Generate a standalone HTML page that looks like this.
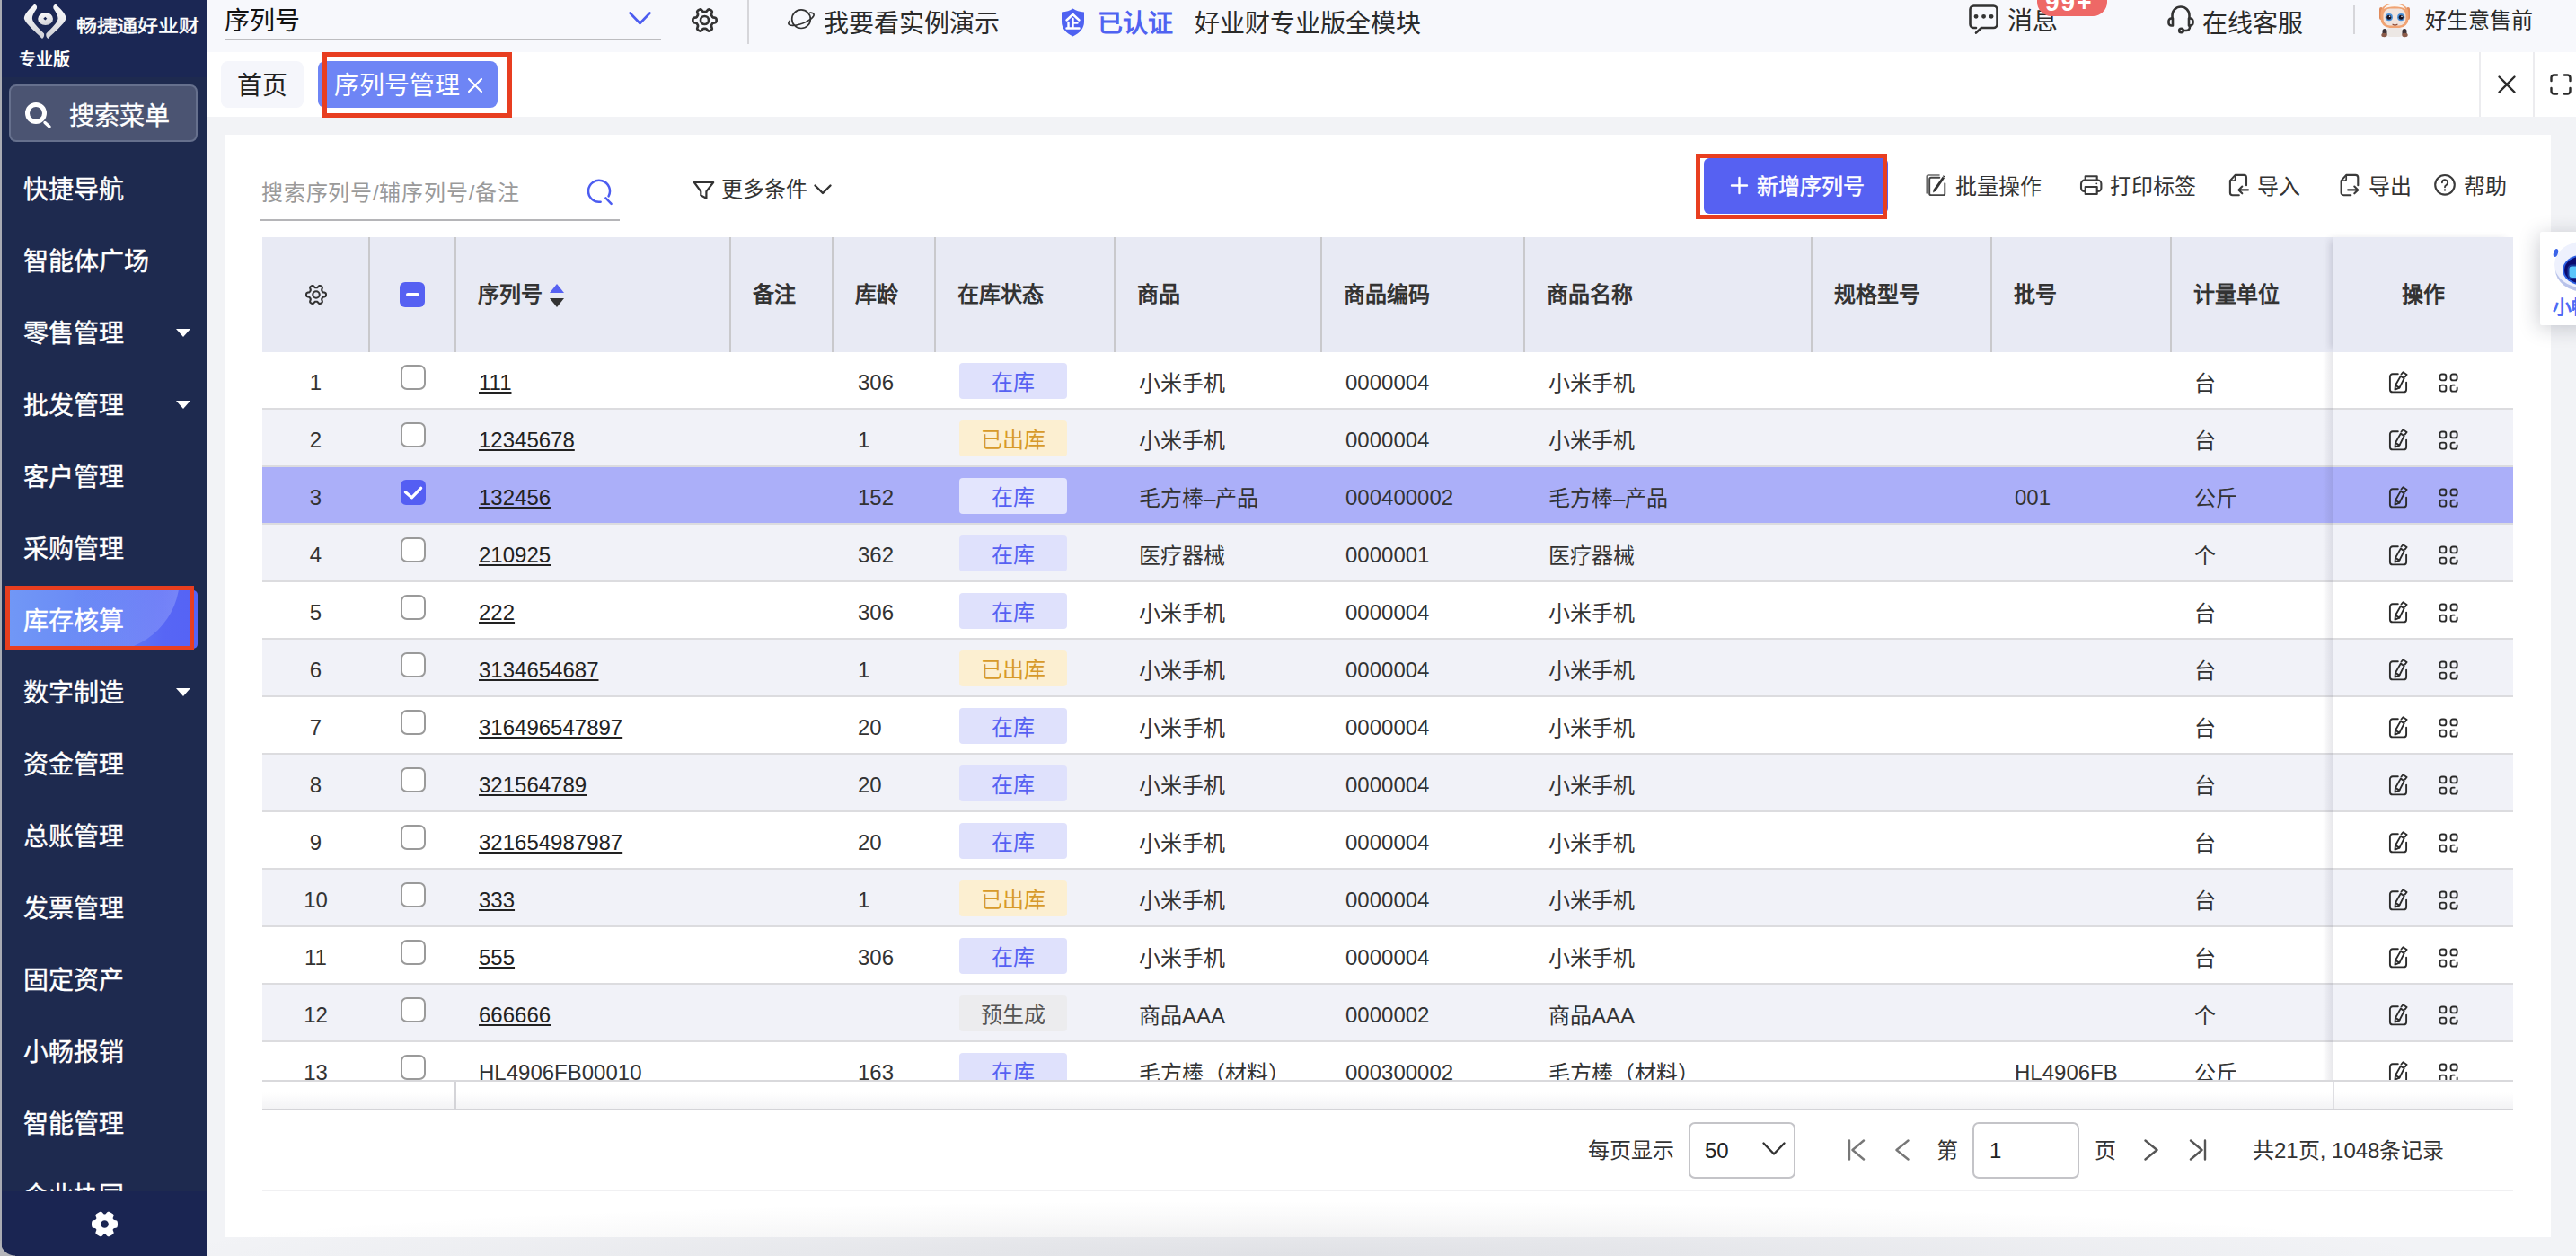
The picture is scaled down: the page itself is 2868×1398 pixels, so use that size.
<!DOCTYPE html>
<html lang="zh-CN">
<head>
<meta charset="utf-8">
<title>序列号管理</title>
<style>
*{box-sizing:border-box;margin:0;padding:0}
html,body{width:2868px;height:1398px;overflow:hidden;background:#f2f3f6}
body{font-family:"Liberation Sans",sans-serif;color:#333;position:relative;font-size:24px}
.abs{position:absolute}
svg{display:block;overflow:visible}
/* sidebar */
#side{position:absolute;left:0;top:0;width:230px;height:1398px;background:#1e2a4f;overflow:hidden}
#side .edge{position:absolute;left:0;top:0;width:2px;height:1398px;background:#a9abb3}
#side .logo{position:absolute;left:2px;top:0;width:228px;height:86px;background:#1b2754}
#side .brand{position:absolute;left:85px;top:15px;font-size:23px;font-weight:normal;-webkit-text-stroke:.55px #fff;color:#fff;letter-spacing:-0.3px;white-space:nowrap;line-height:28px;transform:scaleY(.86);transform-origin:0 50%}
#side .edition{position:absolute;left:21px;top:54px;font-size:19px;font-weight:bold;color:#fff;line-height:26px}
#side .sbox{position:absolute;left:10px;top:94px;width:210px;height:64px;background:#4b5472;border:2px solid #66708d;border-radius:8px}
#side .sbox span{position:absolute;left:65px;top:17px;font-size:28px;-webkit-text-stroke:.4px #fff;color:#fff;line-height:34px;white-space:nowrap}
#side .mi{position:absolute;left:26px;font-size:28px;-webkit-text-stroke:.4px #fff;color:#fff;line-height:40px;white-space:nowrap}
#side .arr{position:absolute;left:196px;width:0;height:0;border-left:8px solid transparent;border-right:8px solid transparent;border-top:9px solid #fff}
#side .active{position:absolute;left:7px;top:657px;width:213px;height:65px;border-radius:5px;background:linear-gradient(90deg,#7198f6 0%,#6b8cf6 35%,#6079f5 62%,#5766f5 82%,#5563f5 100%);overflow:hidden}
#side .active i{position:absolute;left:29px;top:-96px;width:164px;height:164px;border-radius:82px;background:linear-gradient(100deg,rgba(255,255,255,0) 35%,rgba(190,205,255,.34) 100%)}
#side .redbox{position:absolute;left:6px;top:652px;width:210px;height:72px;border:5px solid #e83e20}
#side .foot{position:absolute;left:2px;top:1326px;width:228px;height:72px;background:#1a2552}
#side .corner{position:absolute;left:0;top:1381px;width:17px;height:17px;background:radial-gradient(circle at 17px 0,rgba(0,0,0,0) 16px,#b4b5ba 17px)}
/* top bar */
#top{position:absolute;left:230px;top:0;width:2638px;height:58px;background:#f7f8fc}
#top .t{position:absolute;font-size:28px;line-height:36px;white-space:nowrap;color:#2a2a2a;top:4px}
.badge{position:absolute;left:2038px;top:-24px;width:78px;height:42px;border-radius:16px;background:#ee6866;overflow:hidden}
.badge span{position:absolute;left:9px;top:9px;font-size:28px;font-weight:bold;color:#fff;line-height:36px;letter-spacing:2px}
/* tabs */
#tabs{position:absolute;left:230px;top:58px;width:2638px;height:72px;background:#fff}
#tabs .tab{position:absolute;top:10px;height:52px;border-radius:8px;font-size:28px;line-height:56px;white-space:nowrap;overflow:hidden}
/* card */
#card{position:absolute;left:250px;top:150px;width:2590px;height:1227px;background:#fff}
.tb{position:absolute;font-size:24px;line-height:32px;white-space:nowrap;color:#333}
.box{position:absolute;border:2px solid #c4c4c8;border-radius:7px;background:#fff}
.box span{position:absolute;top:14px;font-size:24px;line-height:32px;color:#222}
/* table */
#thead{position:absolute;left:292px;top:264px;width:2506px;height:128px;background:#e8eaf4}
#thead .vl{position:absolute;top:0;width:2px;height:128px;background:#c9c9cc}
#thead .h{position:absolute;top:48px;font-size:24px;font-weight:bold;line-height:32px;color:#333;white-space:nowrap}
#thead .opsh{position:absolute;left:2306px;top:0;width:200px;height:128px;background:#e8eaf4;box-shadow:-6px 0 8px -3px rgba(60,60,90,.22)}
#tbody{position:absolute;left:292px;top:392px;width:2506px;height:812px;overflow:hidden;border-bottom:2px solid #d9d9dc}
.row{position:absolute;left:0;width:2506px;height:64px;border-bottom:2px solid #dcdcdf;background:#fff}
.row.alt{background:#f1f2f8}
.row.sel{background:#abaff9}
.row .c{position:absolute;top:18px;font-size:24px;line-height:32px;white-space:nowrap;color:#333}
.row .n{left:0;width:119px;text-align:center}
.row .z{top:19px}
.row .u{text-decoration:underline;text-underline-offset:2px;text-decoration-thickness:2px;color:#222}
.row .cb{position:absolute;left:154px;top:14px;width:28px;height:28px;border:2px solid #9a9a9a;border-radius:7px;background:#fff}
.row .cb.on{background:#545ef3;border-color:#545ef3;border-radius:6px}
.tag{position:absolute;left:776px;top:12px;width:120px;height:40px;border-radius:4px;font-size:24px;line-height:44px;text-align:center;overflow:hidden}
.tag.ta{background:#dfe1fc;color:#5661f2}
.tag.tb{background:#fcefd1;color:#d79a2a}
.tag.tc{background:#ececee;color:#555}
.row.sel .tag.ta{background:#e3e5fd}
.ops{position:absolute;left:2306px;top:0;width:200px;height:62px}
.opshadow{position:absolute;left:2294px;top:0;width:12px;height:813px;background:linear-gradient(90deg,rgba(60,60,90,0),rgba(60,60,90,.13))}
#scroll{position:absolute;left:292px;top:1204px;width:2506px;height:32px;border-bottom:2px solid #d4d4d8;background:linear-gradient(180deg,#fff 40%,#f3f3f5 100%)}
#float{position:absolute;left:2828px;top:258px;width:60px;height:104px;background:#fff;border-radius:2px;box-shadow:-2px 3px 22px rgba(30,35,60,.22);overflow:hidden}
#btmshade{position:absolute;left:230px;top:1338px;width:2638px;height:60px;pointer-events:none;background:radial-gradient(ellipse 1280px 62px at 46% 100%,rgba(30,32,50,.085) 0%,rgba(30,32,50,.06) 35%,rgba(30,32,50,.02) 75%,rgba(30,32,50,0) 100%)}
</style>
</head>
<body>
<div id="side">
<div class="logo"></div><div class="edge"></div>
<svg class="abs" style="left:26px;top:4px" width="49" height="40" viewBox="0 0 49 40"><defs><linearGradient id="lg1" x1="0" y1="0" x2="0.350" y2="1"><stop offset="0" stop-color="#ffffff"/><stop offset="1" stop-color="#d4d5db"/></linearGradient><linearGradient id="lg2" x1="1" y1="0" x2="0.650" y2="1"><stop offset="0" stop-color="#ffffff"/><stop offset="1" stop-color="#d4d5db"/></linearGradient></defs><path d="M12.200 .8C8 5 1.500 11 .8 16C1 21 13 31 21 38.900C23 37.500 23.600 35.200 22.900 33.300C17 27 10 21 9.900 16.500C9.900 12 13.500 8 15 5.300C15.600 3 14.200 1 12.200 .8Z" fill="url(#lg1)"/><path d="M36.20 0.80C40.40 5.00 46.90 11.00 47.60 16.00C47.40 21.00 35.40 31.00 27.40 38.90C25.40 37.50 24.80 35.20 25.50 33.30C31.40 27.00 38.40 21.00 38.50 16.50C38.50 12.00 34.90 8.00 33.40 5.30C32.80 3.00 34.20 1.00 36.20 0.80Z" fill="url(#lg2)"/><ellipse cx="24.600" cy="17" rx="8.400" ry="7.100" fill="url(#lg1)"/><path d="M24.300 14.800l2 1.900-2 1.900-2-1.900z" fill="#1b2754"/></svg>
<div class="brand">畅捷通好业财</div><div class="edition">专业版</div>
<div class="sbox"><svg class="abs" style="left:16px;top:18px" width="32" height="32" viewBox="0 0 32 32" fill="none" stroke="#fff" stroke-linecap="round"><circle cx="12" cy="12" r="9.500" stroke-width="5"/><path d="M22 22.500l5 4.500" stroke-width="3.400"/></svg><span>搜索菜单</span></div>
<div class="active"><i></i></div><div class="redbox"></div>
<div class="mi" style="top:192px">快捷导航</div>
<div class="mi" style="top:272px">智能体广场</div>
<div class="mi" style="top:352px">零售管理</div>
<div class="arr" style="top:366px"></div>
<div class="mi" style="top:432px">批发管理</div>
<div class="arr" style="top:446px"></div>
<div class="mi" style="top:512px">客户管理</div>
<div class="mi" style="top:592px">采购管理</div>
<div class="mi" style="top:672px">库存核算</div>
<div class="mi" style="top:752px">数字制造</div>
<div class="arr" style="top:766px"></div>
<div class="mi" style="top:832px">资金管理</div>
<div class="mi" style="top:912px">总账管理</div>
<div class="mi" style="top:992px">发票管理</div>
<div class="mi" style="top:1072px">固定资产</div>
<div class="mi" style="top:1152px">小畅报销</div>
<div class="mi" style="top:1232px">智能管理</div>
<div class="mi" style="top:1312px">企业协同</div>
<div class="foot"><div class="abs" style="left:99.500px;top:22px"><svg width="29" height="29" viewBox="0 0 29 29"><path fill="#fff" fill-rule="evenodd" d="M29.00 14.50 L28.97 15.45 L28.87 16.39 L28.69 17.32 L28.30 18.20 L27.12 18.78 L25.35 18.99 L24.39 19.38 L23.92 19.94 L23.67 20.62 L23.82 21.65 L24.52 23.29 L24.60 24.60 L24.04 25.38 L23.32 26.00 L22.56 26.56 L21.75 27.06 L20.91 27.50 L20.05 27.89 L19.15 28.20 L18.20 28.30 L17.10 27.57 L16.03 26.14 L15.22 25.50 L14.50 25.38 L13.78 25.50 L12.97 26.14 L11.90 27.57 L10.80 28.30 L9.85 28.20 L8.95 27.89 L8.09 27.50 L7.25 27.06 L6.44 26.56 L5.68 26.00 L4.96 25.38 L4.40 24.60 L4.48 23.29 L5.18 21.65 L5.33 20.62 L5.08 19.94 L4.61 19.38 L3.65 18.99 L1.88 18.78 L0.70 18.20 L0.31 17.32 L0.13 16.39 L0.03 15.45 L0.00 14.50 L0.03 13.55 L0.13 12.61 L0.31 11.68 L0.70 10.80 L1.88 10.22 L3.65 10.01 L4.61 9.62 L5.08 9.06 L5.33 8.38 L5.18 7.35 L4.48 5.71 L4.40 4.40 L4.96 3.62 L5.68 3.00 L6.44 2.44 L7.25 1.94 L8.09 1.50 L8.95 1.11 L9.85 0.80 L10.80 0.70 L11.90 1.43 L12.97 2.86 L13.78 3.50 L14.50 3.62 L15.22 3.50 L16.03 2.86 L17.10 1.43 L18.20 0.70 L19.15 0.80 L20.05 1.11 L20.91 1.50 L21.75 1.94 L22.56 2.44 L23.32 3.00 L24.04 3.62 L24.60 4.40 L24.52 5.71 L23.82 7.35 L23.67 8.38 L23.92 9.06 L24.39 9.62 L25.35 10.01 L27.12 10.22 L28.30 10.80 L28.69 11.68 L28.87 12.61 L28.97 13.55Z M10.15 14.50 a4.35 4.35 0 1 0 8.70 0 a4.35 4.35 0 1 0 -8.70 0Z"/></svg></div></div>
<div class="corner"></div>
</div>
<div id="top">
<div class="t" style="left:20px;top:6px;color:#111">序列号</div>
<div class="abs" style="left:20px;top:43px;width:486px;height:2px;background:#bdbdc0"></div>
<svg class="abs" style="left:470px;top:13px" width="25" height="15" viewBox="0 0 25 15" fill="none" stroke="#4c5cf0" stroke-width="2.600" stroke-linecap="round" stroke-linejoin="round"><path d="M1.500 1.500l11 11.500 11-11.500"/></svg>
<div class="abs" style="left:539.500px;top:7.500px"><svg width="29" height="29" viewBox="0 0 29 29" fill="none" stroke="#333" stroke-width="2.7" stroke-linejoin="round"><path d="M27.65 14.50 L27.60 15.36 L27.42 16.20 L26.84 16.96 L25.36 17.41 L23.88 17.68 L23.24 18.12 L22.89 18.64 L22.59 19.17 L22.28 19.70 L22.00 20.26 L21.94 21.03 L22.45 22.45 L22.80 23.96 L22.43 24.84 L21.80 25.42 L21.08 25.89 L20.31 26.28 L19.49 26.54 L18.55 26.42 L17.41 25.36 L16.43 24.21 L15.73 23.87 L15.11 23.84 L14.50 23.84 L13.89 23.84 L13.27 23.87 L12.57 24.21 L11.59 25.36 L10.45 26.42 L9.51 26.54 L8.69 26.28 L7.93 25.89 L7.20 25.42 L6.57 24.84 L6.20 23.96 L6.55 22.45 L7.06 21.03 L7.00 20.26 L6.72 19.70 L6.41 19.17 L6.11 18.64 L5.76 18.12 L5.12 17.68 L3.64 17.41 L2.16 16.96 L1.58 16.20 L1.40 15.36 L1.35 14.50 L1.40 13.64 L1.58 12.80 L2.16 12.04 L3.64 11.59 L5.12 11.32 L5.76 10.88 L6.11 10.36 L6.41 9.83 L6.72 9.30 L7.00 8.74 L7.06 7.97 L6.55 6.55 L6.20 5.04 L6.57 4.16 L7.20 3.58 L7.92 3.11 L8.69 2.72 L9.51 2.46 L10.45 2.58 L11.59 3.64 L12.57 4.79 L13.27 5.13 L13.89 5.16 L14.50 5.16 L15.11 5.16 L15.73 5.13 L16.43 4.79 L17.41 3.64 L18.55 2.58 L19.49 2.46 L20.31 2.72 L21.08 3.11 L21.80 3.58 L22.43 4.16 L22.80 5.04 L22.45 6.55 L21.94 7.97 L22.00 8.74 L22.28 9.30 L22.59 9.83 L22.89 10.36 L23.24 10.88 L23.88 11.32 L25.36 11.59 L26.84 12.04 L27.42 12.80 L27.60 13.64Z"/><circle cx="14.5" cy="14.5" r="4.50"/></svg></div>
<div class="abs" style="left:602px;top:0;width:2px;height:49px;background:#d6d6da"></div>
<div class="abs" style="left:647px;top:10px"><svg width="31" height="24" viewBox="0 0 31 24" fill="none" stroke="#333" stroke-width="1.700" stroke-linecap="round" stroke-linejoin="round"><circle cx="15.0" cy="11.2" r="10.300"/><path d="M24.93 4.09 L25.93 4.17 L26.80 4.32 L27.55 4.55 L28.15 4.85 L28.62 5.23 L28.93 5.66 L29.09 6.16 L29.10 6.72 L28.96 7.32 L28.66 7.96 L28.21 8.65 L27.61 9.35 L26.88 10.08 L26.02 10.82 L25.03 11.57 L23.94 12.31 L22.75 13.04 L21.47 13.75 L20.13 14.43 L18.72 15.07 L17.28 15.68 L15.81 16.23 L14.33 16.73 L12.86 17.17 L11.42 17.54 L10.01 17.85 L8.65 18.08 L7.37 18.23 L6.17 18.31 L5.07 18.31 L4.07 18.23 L3.20 18.08 L2.45 17.85 L1.85 17.55 L1.38 17.17 L1.07 16.74 L0.91 16.24 L0.90 15.68 L1.04 15.08 L1.34 14.44 L1.79 13.75 L2.39 13.05"/></svg></div>
<div class="t" style="left:687px;top:9px">我要看实例演示</div>
<svg class="abs" style="left:951px;top:9px" width="27" height="32" viewBox="0 0 27 32"><path d="M13.500 .5c3 2.300 7.500 3.700 12.500 3.900v10.900c0 7.200-5 12.900-12.500 16.200C6 28.200 1 22.500 1 15.300V4.400C6 4.200 10.500 2.800 13.500 .5z" fill="#4f62f1"/><path d="M6.500 13.500l7-6.500 7 6.500M13.500 12v10M13.500 16.500h5M8.500 16v6.500M6.500 22.500h14" fill="none" stroke="#fff" stroke-width="2.400" stroke-linecap="round" stroke-linejoin="round"/></svg>
<div class="t" style="left:992px;top:9px;color:#4f62f1;font-weight:bold">已认证</div>
<div class="t" style="left:1100px;top:9px">好业财专业版全模块</div>
<svg class="abs" style="left:1962px;top:5px" width="33" height="33" viewBox="0 0 33 33" fill="none" stroke="#333" stroke-width="2.600" stroke-linecap="round" stroke-linejoin="round"><path d="M8 31.500l6-5.500h13.500a4 4 0 0 0 4-4V5.500a4 4 0 0 0-4-4h-22a4 4 0 0 0-4 4V22a4 4 0 0 0 4 4H8"/><path d="M8 13.300h.1M16.500 13.300h.1M25 13.300h.1" stroke-width="4.800"/></svg>
<div class="t" style="left:2005px;top:6px">消息</div>
<div class="badge"><span>99+</span></div>
<svg class="abs" style="left:2183px;top:6px" width="30" height="31" viewBox="0 0 30 31" fill="none" stroke="#333" stroke-width="2.600" stroke-linecap="round" stroke-linejoin="round"><path d="M5.500 14.500V11a9.500 9.500 0 0 1 19 0v3.500"/><path d="M6 14.500H4.500a3 3 0 0 0-3 3v2a3 3 0 0 0 3 3H6z"/><path d="M24 14.500h1.500a3 3 0 0 1 3 3v2a3 3 0 0 1-3 3H24z"/><path d="M25 22.500v1.500a4 4 0 0 1-4 4h-3"/><circle cx="15.500" cy="28" r="2.300"/></svg>
<div class="t" style="left:2222px;top:9px">在线客服</div>
<div class="abs" style="left:2390px;top:6px;width:2px;height:32px;background:#d6d6da"></div>
<svg class="abs" style="left:2418px;top:4px" width="36" height="38" viewBox="0 0 36 38">
<rect x="9" y="27" width="18" height="10" rx="4" fill="#ece7e4"/><rect x="4.500" y="28" width="5" height="8" rx="2.500" fill="#3b3136"/><rect x="26.500" y="28" width="5" height="8" rx="2.500" fill="#3b3136"/><ellipse cx="6.500" cy="35" rx="3.200" ry="2.200" fill="#8a5a48"/><ellipse cx="29.500" cy="35" rx="3.200" ry="2.200" fill="#8a5a48"/>
<rect x="1" y="4" width="4" height="14" rx="2" fill="#e08b5c"/><rect x="31" y="4" width="4" height="14" rx="2" fill="#e08b5c"/>
<rect x="2.500" y="0.500" width="31" height="26.500" rx="10" fill="#f0a373"/><path d="M6 6c2-4 6-5.500 12-5.500S28 2 30 6c-3-2-7-2.800-12-2.800S9 4 6 6z" fill="#fbf7f4"/>
<rect x="5.500" y="5.500" width="25" height="19" rx="7.500" fill="#efe3dd"/>
<circle cx="11.800" cy="15.200" r="4.100" fill="#4a90d9"/><circle cx="25.200" cy="15.200" r="4.100" fill="#4a90d9"/><circle cx="11.800" cy="15.200" r="2.500" fill="#1b1320"/><circle cx="25.200" cy="15.200" r="2.500" fill="#1b1320"/><circle cx="12.600" cy="14.300" r=".8" fill="#fff"/><circle cx="26" cy="14.300" r=".8" fill="#fff"/>
<path d="M16 23.200q2.500 1.500 5 0" stroke="#8c4a35" stroke-width="1.200" fill="none" stroke-linecap="round"/></svg>
<div class="t" style="left:2470px;font-size:24px;top:5px">好生意售前</div>
</div>
<div id="tabs">
<div class="tab" style="left:16px;width:92px;background:#f5f6fb;color:#222;text-align:center">首页</div>
<div class="tab" style="left:124px;width:200px;background:#6e85f5;color:#fff;padding-left:18px">序列号管理<svg class="abs" style="left:165.500px;top:17.500px" width="18" height="18" viewBox="0 0 18 18" stroke="#fff" stroke-width="2.200" stroke-linecap="round"><path d="M2 2l14 14M16 2L2 16"/></svg></div>
<div class="abs" style="left:129px;top:0;width:211px;height:73px;border:5px solid #e83e20"></div>
<div class="abs" style="left:2530px;top:0;width:2px;height:72px;background:#ececef"></div>
<div class="abs" style="left:2590px;top:0;width:2px;height:72px;background:#ececef"></div>
<svg class="abs" style="left:2551px;top:26px" width="20" height="20" viewBox="0 0 20 20" stroke="#2a2a2a" stroke-width="2.300" stroke-linecap="round"><path d="M1.500 1.500l17 17M18.500 1.500l-17 17"/></svg>
<svg class="abs" style="left:2609px;top:24px" width="24" height="24" viewBox="0 0 24 24" fill="none" stroke="#2a2a2a" stroke-width="2.400" stroke-linecap="round" stroke-linejoin="round"><path d="M1.500 8V4.500a3 3 0 0 1 3-3H8M16 1.500h3.500a3 3 0 0 1 3 3V8M22.500 16v3.500a3 3 0 0 1-3 3H16M8 22.500H4.500a3 3 0 0 1-3-3V16"/></svg>
</div>
<div id="card"></div>
<div class="tb" style="left:291px;top:199px;color:#9a9a9a;letter-spacing:.8px">搜索序列号/辅序列号/备注</div>
<div class="abs" style="left:290px;top:244px;width:400px;height:2px;background:#b5b5b8"></div>
<svg class="abs" style="left:654px;top:200px" width="30" height="30" viewBox="0 0 30 30" fill="none" stroke="#4c5cf0" stroke-width="2.500" stroke-linecap="round"><path d="M14.67 24.68A12.0 12.0 0 1 1 23.60 18.43"/><path d="M20.36 20.43L26.62 26.90"/></svg>
<svg class="abs" style="left:771px;top:200px" width="25" height="23" viewBox="0 0 25 23" fill="none" stroke="#333" stroke-width="2.200" stroke-linecap="round" stroke-linejoin="round"><path d="M1.900 3H23.200L15.400 13.200V20.800L9.300 17.400V13.200Z"/></svg>
<div class="tb" style="left:803px;top:195px">更多条件</div>
<svg class="abs" style="left:906px;top:205px" width="20" height="12" viewBox="0 0 20 12" fill="none" stroke="#333" stroke-width="2.400" stroke-linecap="round" stroke-linejoin="round"><path d="M1.500 1.500l8.500 8.500 8.500-8.500"/></svg>
<div class="abs" style="left:1897px;top:176px;width:205px;height:62px;background:#5661f2;border-radius:6px"></div>
<svg class="abs" style="left:1927px;top:197px" width="19" height="19" viewBox="0 0 19 19" stroke="#fff" stroke-width="2.400" stroke-linecap="round"><path d="M9.500 1v17M1 9.500h17"/></svg>
<div class="tb" style="left:1956px;top:192px;color:#fff;-webkit-text-stroke:.5px #fff">新增序列号</div>
<div class="abs" style="left:1888px;top:171px;width:213px;height:73px;border:5px solid #e83e20"></div>
<div class="abs" style="left:2144px;top:194px"><svg width="23" height="25" viewBox="0 0 23 25" fill="none" stroke-linecap="round" stroke-linejoin="round"><path d="M1.200 21V2.700Q1.200 1 2.900 1H15" stroke="#6a6a6a" stroke-width="1.600"/><path d="M15.300 3.700H5.900Q4.200 3.700 4.200 5.400V21.400Q4.200 23.100 5.900 23.100H19.600Q21.300 23.100 21.300 21.400V10.300" stroke="#444" stroke-width="1.900"/><path d="M18.700 2.700l2.300 1.500L11.300 18.600 8.100 20.500 8.600 16.900z" fill="#333"/><path d="M19.600 1.300l2.300 1.500-.7 1-2.300-1.500z" fill="#333"/></svg></div><div class="tb" style="left:2177px;top:192px">批量操作</div>
<div class="abs" style="left:2316px;top:195px"><svg width="25" height="22" viewBox="0 0 25 22" fill="none" stroke="#3a3a3a" stroke-width="2.100" stroke-linecap="butt" stroke-linejoin="round"><path d="M5.700 5.500V1.300H18.700V5.500"/><path d="M5.700 18H4.700A3.700 3.700 0 0 1 1 14.300V9.500A4 4 0 0 1 5 5.500H19.400A4 4 0 0 1 23.400 9.500V14.300A3.700 3.700 0 0 1 19.700 18H18.700"/><path d="M5.700 13H18.700V21H5.700z"/><circle cx="18.300" cy="9.300" r=".9" fill="#3a3a3a" stroke="none"/></svg></div><div class="tb" style="left:2349px;top:192px">打印标签</div>
<div class="abs" style="left:2482px;top:194px"><svg width="22" height="24" viewBox="0 0 22 24" fill="none" stroke="#3a3a3a" stroke-width="2.100" stroke-linecap="round" stroke-linejoin="round"><path d="M10.800 23.200H3.600A2.800 2.800 0 0 1 .900 20.400V7.100L6.600 .9H16.200A2.800 2.800 0 0 1 19 3.700V12.300"/><path d="M6.600 1.500V5.500A1.500 1.500 0 0 1 5.100 7H1.500" stroke-width="1.700"/><path d="M21 17.400H10.800M14.300 13.500L10.400 17.400 14.300 21.300"/></svg></div><div class="tb" style="left:2513px;top:192px">导入</div>
<div class="abs" style="left:2606px;top:194px"><svg width="22" height="24" viewBox="0 0 22 24" fill="none" stroke="#3a3a3a" stroke-width="2.100" stroke-linecap="round" stroke-linejoin="round"><path d="M11.300 23.200H3.400A2.800 2.800 0 0 1 .600 20.400V7.100L6.200 .9H16.500A2.800 2.800 0 0 1 19.300 3.700V12.300"/><path d="M6.200 1.500V5.500A1.500 1.500 0 0 1 4.700 7H1.200" stroke-width="1.700"/><path d="M8.100 17.400H19M15.300 13.500L19.300 17.400 15.300 21.300"/></svg></div><div class="tb" style="left:2637px;top:192px">导出</div>
<div class="abs" style="left:2710px;top:194px"><svg width="24" height="24" viewBox="0 0 24 24" fill="none" stroke="#3a3a3a" stroke-width="2.100" stroke-linecap="round" stroke-linejoin="round"><circle cx="12" cy="11.800" r="10.800"/><path d="M8.900 9.300a3.100 3.100 0 1 1 4.600 2.700c-1 .600-1.500 1.200-1.500 2.300" stroke-width="1.900"/><circle cx="12" cy="17.400" r="1.200" fill="#3a3a3a" stroke="none"/></svg></div><div class="tb" style="left:2743px;top:192px">帮助</div>
<div id="thead">
<div class="vl" style="left:118px"></div>
<div class="vl" style="left:214px"></div>
<div class="vl" style="left:520px"></div>
<div class="vl" style="left:634px"></div>
<div class="vl" style="left:748px"></div>
<div class="vl" style="left:948px"></div>
<div class="vl" style="left:1178px"></div>
<div class="vl" style="left:1404px"></div>
<div class="vl" style="left:1724px"></div>
<div class="vl" style="left:1924px"></div>
<div class="vl" style="left:2124px"></div>
<div class="abs" style="left:47.800px;top:52px"><svg width="24" height="24" viewBox="0 0 24 24" fill="none" stroke="#333" stroke-width="2.1" stroke-linejoin="round"><path d="M22.95 12.00 L22.91 12.72 L22.76 13.42 L22.28 14.04 L21.04 14.42 L19.81 14.65 L19.27 15.01 L18.99 15.45 L18.73 15.89 L18.48 16.33 L18.25 16.79 L18.20 17.44 L18.62 18.62 L18.91 19.88 L18.61 20.61 L18.07 21.09 L17.48 21.48 L16.84 21.81 L16.15 22.02 L15.37 21.92 L14.42 21.04 L13.61 20.09 L13.03 19.81 L12.51 19.77 L12.00 19.77 L11.49 19.77 L10.97 19.81 L10.39 20.09 L9.58 21.04 L8.63 21.92 L7.85 22.02 L7.16 21.81 L6.53 21.48 L5.93 21.09 L5.39 20.61 L5.09 19.88 L5.38 18.62 L5.80 17.44 L5.75 16.79 L5.52 16.33 L5.27 15.89 L5.01 15.45 L4.73 15.01 L4.19 14.65 L2.96 14.42 L1.72 14.04 L1.24 13.42 L1.09 12.72 L1.05 12.00 L1.09 11.28 L1.24 10.58 L1.72 9.96 L2.96 9.58 L4.19 9.35 L4.73 8.99 L5.01 8.55 L5.27 8.11 L5.52 7.67 L5.75 7.21 L5.80 6.56 L5.38 5.38 L5.09 4.12 L5.39 3.39 L5.93 2.91 L6.52 2.52 L7.16 2.19 L7.85 1.98 L8.63 2.08 L9.58 2.96 L10.39 3.91 L10.97 4.19 L11.49 4.23 L12.00 4.23 L12.51 4.23 L13.03 4.19 L13.61 3.91 L14.42 2.96 L15.37 2.08 L16.15 1.98 L16.84 2.19 L17.48 2.52 L18.07 2.91 L18.61 3.39 L18.91 4.12 L18.62 5.38 L18.20 6.56 L18.25 7.21 L18.48 7.67 L18.73 8.11 L18.99 8.55 L19.27 8.99 L19.81 9.35 L21.04 9.58 L22.28 9.96 L22.76 10.58 L22.91 11.28Z"/><circle cx="12.0" cy="12.0" r="3.72"/></svg></div>
<div class="abs" style="left:153px;top:50px;width:28px;height:28px;border-radius:6px;background:#5661f2"><div class="abs" style="left:6.500px;top:12px;width:15px;height:4px;border-radius:2px;background:#fff"></div></div>
<div class="h" style="left:240px">序列号</div>
<div class="h" style="left:546px">备注</div>
<div class="h" style="left:660px">库龄</div>
<div class="h" style="left:774px">在库状态</div>
<div class="h" style="left:974px">商品</div>
<div class="h" style="left:1204px">商品编码</div>
<div class="h" style="left:1430px">商品名称</div>
<div class="h" style="left:1750px">规格型号</div>
<div class="h" style="left:1950px">批号</div>
<div class="h" style="left:2150px">计量单位</div>
<div class="abs" style="left:320px;top:52px;width:0;height:0;border-left:8.500px solid transparent;border-right:8.500px solid transparent;border-bottom:10px solid #5661f2"></div>
<div class="abs" style="left:320px;top:68px;width:0;height:0;border-left:8.500px solid transparent;border-right:8.500px solid transparent;border-top:10px solid #333"></div>
<div class="opsh"><div class="h" style="left:0;width:200px;text-align:center">操作</div></div>
</div>
<div id="tbody">
<div class="row" style="top:0px">
<div class="c n">1</div>
<div class="cb"></div>
<div class="c u" style="left:241px">111</div>
<div class="c" style="left:663px">306</div>
<div class="tag ta">在库</div>
<div class="c z" style="left:976px">小米手机</div>
<div class="c" style="left:1206px">0000004</div>
<div class="c z" style="left:1432px">小米手机</div>
<div class="c z" style="left:2151px">台</div>
<div class="ops"><div class="abs" style="left:61px;top:22px"><svg width="22" height="24" viewBox="0 0 22 24" fill="none" stroke="#2b2b2b" stroke-width="1.900" stroke-linecap="round" stroke-linejoin="round"><path d="M10.800 2.300H4.900A3 3 0 0 0 1.900 5.300V19.400A3 3 0 0 0 4.900 22.400H17.100A3 3 0 0 0 20.100 19.400V11.600"/><path d="M13.800 4.600L17.700 7.100 12.400 17.600 7.500 19.600 8 14.700Z"/><path d="M8 14.700L12.400 17.600"/><path d="M14.500 2.500L16.400 .3 20.600 3 18.700 5.300"/></svg></div><div class="abs" style="left:117px;top:23px"><svg width="22" height="22" viewBox="0 0 22 22" fill="none" stroke="#2b2b2b" stroke-width="1.900" stroke-linecap="round" stroke-linejoin="round"><rect x="1.450" y="1.550" width="6.900" height="6.800" rx="2.400"/><rect x="13.550" y="1.550" width="7.100" height="6.800" rx="2.400"/><rect x="1.450" y="13.650" width="6.900" height="6.950" rx="2.400"/><path d="M17.600 13.650H15.950A2.400 2.400 0 0 0 13.550 16.050V18.200A2.400 2.400 0 0 0 15.950 20.600H18.250A2.400 2.400 0 0 0 20.650 18.200V16.500"/></svg></div></div>
</div>
<div class="row alt" style="top:64px">
<div class="c n">2</div>
<div class="cb"></div>
<div class="c u" style="left:241px">12345678</div>
<div class="c" style="left:663px">1</div>
<div class="tag tb">已出库</div>
<div class="c z" style="left:976px">小米手机</div>
<div class="c" style="left:1206px">0000004</div>
<div class="c z" style="left:1432px">小米手机</div>
<div class="c z" style="left:2151px">台</div>
<div class="ops"><div class="abs" style="left:61px;top:22px"><svg width="22" height="24" viewBox="0 0 22 24" fill="none" stroke="#2b2b2b" stroke-width="1.900" stroke-linecap="round" stroke-linejoin="round"><path d="M10.800 2.300H4.900A3 3 0 0 0 1.900 5.300V19.400A3 3 0 0 0 4.900 22.400H17.100A3 3 0 0 0 20.100 19.400V11.600"/><path d="M13.800 4.600L17.700 7.100 12.400 17.600 7.500 19.600 8 14.700Z"/><path d="M8 14.700L12.400 17.600"/><path d="M14.500 2.500L16.400 .3 20.600 3 18.700 5.300"/></svg></div><div class="abs" style="left:117px;top:23px"><svg width="22" height="22" viewBox="0 0 22 22" fill="none" stroke="#2b2b2b" stroke-width="1.900" stroke-linecap="round" stroke-linejoin="round"><rect x="1.450" y="1.550" width="6.900" height="6.800" rx="2.400"/><rect x="13.550" y="1.550" width="7.100" height="6.800" rx="2.400"/><rect x="1.450" y="13.650" width="6.900" height="6.950" rx="2.400"/><path d="M17.600 13.650H15.950A2.400 2.400 0 0 0 13.550 16.050V18.200A2.400 2.400 0 0 0 15.950 20.600H18.250A2.400 2.400 0 0 0 20.650 18.200V16.500"/></svg></div></div>
</div>
<div class="row sel" style="top:128px">
<div class="c n">3</div>
<div class="cb on"><svg class="abs" style="left:2px;top:3px" width="20" height="18" viewBox="0 0 20 18" fill="none" stroke="#fff" stroke-width="3.300" stroke-linecap="round" stroke-linejoin="round"><path d="M1.400 8.800L8.400 14.800L18.600 4.300"/></svg></div>
<div class="c u" style="left:241px">132456</div>
<div class="c" style="left:663px">152</div>
<div class="tag ta">在库</div>
<div class="c z" style="left:976px">毛方棒–产品</div>
<div class="c" style="left:1206px">000400002</div>
<div class="c z" style="left:1432px">毛方棒–产品</div>
<div class="c" style="left:1951px">001</div>
<div class="c z" style="left:2151px">公斤</div>
<div class="ops"><div class="abs" style="left:61px;top:22px"><svg width="22" height="24" viewBox="0 0 22 24" fill="none" stroke="#2b2b2b" stroke-width="1.900" stroke-linecap="round" stroke-linejoin="round"><path d="M10.800 2.300H4.900A3 3 0 0 0 1.900 5.300V19.400A3 3 0 0 0 4.900 22.400H17.100A3 3 0 0 0 20.100 19.400V11.600"/><path d="M13.800 4.600L17.700 7.100 12.400 17.600 7.500 19.600 8 14.700Z"/><path d="M8 14.700L12.400 17.600"/><path d="M14.500 2.500L16.400 .3 20.600 3 18.700 5.300"/></svg></div><div class="abs" style="left:117px;top:23px"><svg width="22" height="22" viewBox="0 0 22 22" fill="none" stroke="#2b2b2b" stroke-width="1.900" stroke-linecap="round" stroke-linejoin="round"><rect x="1.450" y="1.550" width="6.900" height="6.800" rx="2.400"/><rect x="13.550" y="1.550" width="7.100" height="6.800" rx="2.400"/><rect x="1.450" y="13.650" width="6.900" height="6.950" rx="2.400"/><path d="M17.600 13.650H15.950A2.400 2.400 0 0 0 13.550 16.050V18.200A2.400 2.400 0 0 0 15.950 20.600H18.250A2.400 2.400 0 0 0 20.650 18.200V16.500"/></svg></div></div>
</div>
<div class="row alt" style="top:192px">
<div class="c n">4</div>
<div class="cb"></div>
<div class="c u" style="left:241px">210925</div>
<div class="c" style="left:663px">362</div>
<div class="tag ta">在库</div>
<div class="c z" style="left:976px">医疗器械</div>
<div class="c" style="left:1206px">0000001</div>
<div class="c z" style="left:1432px">医疗器械</div>
<div class="c z" style="left:2151px">个</div>
<div class="ops"><div class="abs" style="left:61px;top:22px"><svg width="22" height="24" viewBox="0 0 22 24" fill="none" stroke="#2b2b2b" stroke-width="1.900" stroke-linecap="round" stroke-linejoin="round"><path d="M10.800 2.300H4.900A3 3 0 0 0 1.900 5.300V19.400A3 3 0 0 0 4.900 22.400H17.100A3 3 0 0 0 20.100 19.400V11.600"/><path d="M13.800 4.600L17.700 7.100 12.400 17.600 7.500 19.600 8 14.700Z"/><path d="M8 14.700L12.400 17.600"/><path d="M14.500 2.500L16.400 .3 20.600 3 18.700 5.300"/></svg></div><div class="abs" style="left:117px;top:23px"><svg width="22" height="22" viewBox="0 0 22 22" fill="none" stroke="#2b2b2b" stroke-width="1.900" stroke-linecap="round" stroke-linejoin="round"><rect x="1.450" y="1.550" width="6.900" height="6.800" rx="2.400"/><rect x="13.550" y="1.550" width="7.100" height="6.800" rx="2.400"/><rect x="1.450" y="13.650" width="6.900" height="6.950" rx="2.400"/><path d="M17.600 13.650H15.950A2.400 2.400 0 0 0 13.550 16.050V18.200A2.400 2.400 0 0 0 15.950 20.600H18.250A2.400 2.400 0 0 0 20.650 18.200V16.500"/></svg></div></div>
</div>
<div class="row" style="top:256px">
<div class="c n">5</div>
<div class="cb"></div>
<div class="c u" style="left:241px">222</div>
<div class="c" style="left:663px">306</div>
<div class="tag ta">在库</div>
<div class="c z" style="left:976px">小米手机</div>
<div class="c" style="left:1206px">0000004</div>
<div class="c z" style="left:1432px">小米手机</div>
<div class="c z" style="left:2151px">台</div>
<div class="ops"><div class="abs" style="left:61px;top:22px"><svg width="22" height="24" viewBox="0 0 22 24" fill="none" stroke="#2b2b2b" stroke-width="1.900" stroke-linecap="round" stroke-linejoin="round"><path d="M10.800 2.300H4.900A3 3 0 0 0 1.900 5.300V19.400A3 3 0 0 0 4.900 22.400H17.100A3 3 0 0 0 20.100 19.400V11.600"/><path d="M13.800 4.600L17.700 7.100 12.400 17.600 7.500 19.600 8 14.700Z"/><path d="M8 14.700L12.400 17.600"/><path d="M14.500 2.500L16.400 .3 20.600 3 18.700 5.300"/></svg></div><div class="abs" style="left:117px;top:23px"><svg width="22" height="22" viewBox="0 0 22 22" fill="none" stroke="#2b2b2b" stroke-width="1.900" stroke-linecap="round" stroke-linejoin="round"><rect x="1.450" y="1.550" width="6.900" height="6.800" rx="2.400"/><rect x="13.550" y="1.550" width="7.100" height="6.800" rx="2.400"/><rect x="1.450" y="13.650" width="6.900" height="6.950" rx="2.400"/><path d="M17.600 13.650H15.950A2.400 2.400 0 0 0 13.550 16.050V18.200A2.400 2.400 0 0 0 15.950 20.600H18.250A2.400 2.400 0 0 0 20.650 18.200V16.500"/></svg></div></div>
</div>
<div class="row alt" style="top:320px">
<div class="c n">6</div>
<div class="cb"></div>
<div class="c u" style="left:241px">3134654687</div>
<div class="c" style="left:663px">1</div>
<div class="tag tb">已出库</div>
<div class="c z" style="left:976px">小米手机</div>
<div class="c" style="left:1206px">0000004</div>
<div class="c z" style="left:1432px">小米手机</div>
<div class="c z" style="left:2151px">台</div>
<div class="ops"><div class="abs" style="left:61px;top:22px"><svg width="22" height="24" viewBox="0 0 22 24" fill="none" stroke="#2b2b2b" stroke-width="1.900" stroke-linecap="round" stroke-linejoin="round"><path d="M10.800 2.300H4.900A3 3 0 0 0 1.900 5.300V19.400A3 3 0 0 0 4.900 22.400H17.100A3 3 0 0 0 20.100 19.400V11.600"/><path d="M13.800 4.600L17.700 7.100 12.400 17.600 7.500 19.600 8 14.700Z"/><path d="M8 14.700L12.400 17.600"/><path d="M14.500 2.500L16.400 .3 20.600 3 18.700 5.300"/></svg></div><div class="abs" style="left:117px;top:23px"><svg width="22" height="22" viewBox="0 0 22 22" fill="none" stroke="#2b2b2b" stroke-width="1.900" stroke-linecap="round" stroke-linejoin="round"><rect x="1.450" y="1.550" width="6.900" height="6.800" rx="2.400"/><rect x="13.550" y="1.550" width="7.100" height="6.800" rx="2.400"/><rect x="1.450" y="13.650" width="6.900" height="6.950" rx="2.400"/><path d="M17.600 13.650H15.950A2.400 2.400 0 0 0 13.550 16.050V18.200A2.400 2.400 0 0 0 15.950 20.600H18.250A2.400 2.400 0 0 0 20.650 18.200V16.500"/></svg></div></div>
</div>
<div class="row" style="top:384px">
<div class="c n">7</div>
<div class="cb"></div>
<div class="c u" style="left:241px">316496547897</div>
<div class="c" style="left:663px">20</div>
<div class="tag ta">在库</div>
<div class="c z" style="left:976px">小米手机</div>
<div class="c" style="left:1206px">0000004</div>
<div class="c z" style="left:1432px">小米手机</div>
<div class="c z" style="left:2151px">台</div>
<div class="ops"><div class="abs" style="left:61px;top:22px"><svg width="22" height="24" viewBox="0 0 22 24" fill="none" stroke="#2b2b2b" stroke-width="1.900" stroke-linecap="round" stroke-linejoin="round"><path d="M10.800 2.300H4.900A3 3 0 0 0 1.900 5.300V19.400A3 3 0 0 0 4.900 22.400H17.100A3 3 0 0 0 20.100 19.400V11.600"/><path d="M13.800 4.600L17.700 7.100 12.400 17.600 7.500 19.600 8 14.700Z"/><path d="M8 14.700L12.400 17.600"/><path d="M14.500 2.500L16.400 .3 20.600 3 18.700 5.300"/></svg></div><div class="abs" style="left:117px;top:23px"><svg width="22" height="22" viewBox="0 0 22 22" fill="none" stroke="#2b2b2b" stroke-width="1.900" stroke-linecap="round" stroke-linejoin="round"><rect x="1.450" y="1.550" width="6.900" height="6.800" rx="2.400"/><rect x="13.550" y="1.550" width="7.100" height="6.800" rx="2.400"/><rect x="1.450" y="13.650" width="6.900" height="6.950" rx="2.400"/><path d="M17.600 13.650H15.950A2.400 2.400 0 0 0 13.550 16.050V18.200A2.400 2.400 0 0 0 15.950 20.600H18.250A2.400 2.400 0 0 0 20.650 18.200V16.500"/></svg></div></div>
</div>
<div class="row alt" style="top:448px">
<div class="c n">8</div>
<div class="cb"></div>
<div class="c u" style="left:241px">321564789</div>
<div class="c" style="left:663px">20</div>
<div class="tag ta">在库</div>
<div class="c z" style="left:976px">小米手机</div>
<div class="c" style="left:1206px">0000004</div>
<div class="c z" style="left:1432px">小米手机</div>
<div class="c z" style="left:2151px">台</div>
<div class="ops"><div class="abs" style="left:61px;top:22px"><svg width="22" height="24" viewBox="0 0 22 24" fill="none" stroke="#2b2b2b" stroke-width="1.900" stroke-linecap="round" stroke-linejoin="round"><path d="M10.800 2.300H4.900A3 3 0 0 0 1.900 5.300V19.400A3 3 0 0 0 4.900 22.400H17.100A3 3 0 0 0 20.100 19.400V11.600"/><path d="M13.800 4.600L17.700 7.100 12.400 17.600 7.500 19.600 8 14.700Z"/><path d="M8 14.700L12.400 17.600"/><path d="M14.500 2.500L16.400 .3 20.600 3 18.700 5.300"/></svg></div><div class="abs" style="left:117px;top:23px"><svg width="22" height="22" viewBox="0 0 22 22" fill="none" stroke="#2b2b2b" stroke-width="1.900" stroke-linecap="round" stroke-linejoin="round"><rect x="1.450" y="1.550" width="6.900" height="6.800" rx="2.400"/><rect x="13.550" y="1.550" width="7.100" height="6.800" rx="2.400"/><rect x="1.450" y="13.650" width="6.900" height="6.950" rx="2.400"/><path d="M17.600 13.650H15.950A2.400 2.400 0 0 0 13.550 16.050V18.200A2.400 2.400 0 0 0 15.950 20.600H18.250A2.400 2.400 0 0 0 20.650 18.200V16.500"/></svg></div></div>
</div>
<div class="row" style="top:512px">
<div class="c n">9</div>
<div class="cb"></div>
<div class="c u" style="left:241px">321654987987</div>
<div class="c" style="left:663px">20</div>
<div class="tag ta">在库</div>
<div class="c z" style="left:976px">小米手机</div>
<div class="c" style="left:1206px">0000004</div>
<div class="c z" style="left:1432px">小米手机</div>
<div class="c z" style="left:2151px">台</div>
<div class="ops"><div class="abs" style="left:61px;top:22px"><svg width="22" height="24" viewBox="0 0 22 24" fill="none" stroke="#2b2b2b" stroke-width="1.900" stroke-linecap="round" stroke-linejoin="round"><path d="M10.800 2.300H4.900A3 3 0 0 0 1.900 5.300V19.400A3 3 0 0 0 4.900 22.400H17.100A3 3 0 0 0 20.100 19.400V11.600"/><path d="M13.800 4.600L17.700 7.100 12.400 17.600 7.500 19.600 8 14.700Z"/><path d="M8 14.700L12.400 17.600"/><path d="M14.500 2.500L16.400 .3 20.600 3 18.700 5.300"/></svg></div><div class="abs" style="left:117px;top:23px"><svg width="22" height="22" viewBox="0 0 22 22" fill="none" stroke="#2b2b2b" stroke-width="1.900" stroke-linecap="round" stroke-linejoin="round"><rect x="1.450" y="1.550" width="6.900" height="6.800" rx="2.400"/><rect x="13.550" y="1.550" width="7.100" height="6.800" rx="2.400"/><rect x="1.450" y="13.650" width="6.900" height="6.950" rx="2.400"/><path d="M17.600 13.650H15.950A2.400 2.400 0 0 0 13.550 16.050V18.200A2.400 2.400 0 0 0 15.950 20.600H18.250A2.400 2.400 0 0 0 20.650 18.200V16.500"/></svg></div></div>
</div>
<div class="row alt" style="top:576px">
<div class="c n">10</div>
<div class="cb"></div>
<div class="c u" style="left:241px">333</div>
<div class="c" style="left:663px">1</div>
<div class="tag tb">已出库</div>
<div class="c z" style="left:976px">小米手机</div>
<div class="c" style="left:1206px">0000004</div>
<div class="c z" style="left:1432px">小米手机</div>
<div class="c z" style="left:2151px">台</div>
<div class="ops"><div class="abs" style="left:61px;top:22px"><svg width="22" height="24" viewBox="0 0 22 24" fill="none" stroke="#2b2b2b" stroke-width="1.900" stroke-linecap="round" stroke-linejoin="round"><path d="M10.800 2.300H4.900A3 3 0 0 0 1.900 5.300V19.400A3 3 0 0 0 4.900 22.400H17.100A3 3 0 0 0 20.100 19.400V11.600"/><path d="M13.800 4.600L17.700 7.100 12.400 17.600 7.500 19.600 8 14.700Z"/><path d="M8 14.700L12.400 17.600"/><path d="M14.500 2.500L16.400 .3 20.600 3 18.700 5.300"/></svg></div><div class="abs" style="left:117px;top:23px"><svg width="22" height="22" viewBox="0 0 22 22" fill="none" stroke="#2b2b2b" stroke-width="1.900" stroke-linecap="round" stroke-linejoin="round"><rect x="1.450" y="1.550" width="6.900" height="6.800" rx="2.400"/><rect x="13.550" y="1.550" width="7.100" height="6.800" rx="2.400"/><rect x="1.450" y="13.650" width="6.900" height="6.950" rx="2.400"/><path d="M17.600 13.650H15.950A2.400 2.400 0 0 0 13.550 16.050V18.200A2.400 2.400 0 0 0 15.950 20.600H18.250A2.400 2.400 0 0 0 20.650 18.200V16.500"/></svg></div></div>
</div>
<div class="row" style="top:640px">
<div class="c n">11</div>
<div class="cb"></div>
<div class="c u" style="left:241px">555</div>
<div class="c" style="left:663px">306</div>
<div class="tag ta">在库</div>
<div class="c z" style="left:976px">小米手机</div>
<div class="c" style="left:1206px">0000004</div>
<div class="c z" style="left:1432px">小米手机</div>
<div class="c z" style="left:2151px">台</div>
<div class="ops"><div class="abs" style="left:61px;top:22px"><svg width="22" height="24" viewBox="0 0 22 24" fill="none" stroke="#2b2b2b" stroke-width="1.900" stroke-linecap="round" stroke-linejoin="round"><path d="M10.800 2.300H4.900A3 3 0 0 0 1.900 5.300V19.400A3 3 0 0 0 4.900 22.400H17.100A3 3 0 0 0 20.100 19.400V11.600"/><path d="M13.800 4.600L17.700 7.100 12.400 17.600 7.500 19.600 8 14.700Z"/><path d="M8 14.700L12.400 17.600"/><path d="M14.500 2.500L16.400 .3 20.600 3 18.700 5.300"/></svg></div><div class="abs" style="left:117px;top:23px"><svg width="22" height="22" viewBox="0 0 22 22" fill="none" stroke="#2b2b2b" stroke-width="1.900" stroke-linecap="round" stroke-linejoin="round"><rect x="1.450" y="1.550" width="6.900" height="6.800" rx="2.400"/><rect x="13.550" y="1.550" width="7.100" height="6.800" rx="2.400"/><rect x="1.450" y="13.650" width="6.900" height="6.950" rx="2.400"/><path d="M17.600 13.650H15.950A2.400 2.400 0 0 0 13.550 16.050V18.200A2.400 2.400 0 0 0 15.950 20.600H18.250A2.400 2.400 0 0 0 20.650 18.200V16.500"/></svg></div></div>
</div>
<div class="row alt" style="top:704px">
<div class="c n">12</div>
<div class="cb"></div>
<div class="c u" style="left:241px">666666</div>
<div class="tag tc">预生成</div>
<div class="c z" style="left:976px">商品AAA</div>
<div class="c" style="left:1206px">0000002</div>
<div class="c z" style="left:1432px">商品AAA</div>
<div class="c z" style="left:2151px">个</div>
<div class="ops"><div class="abs" style="left:61px;top:22px"><svg width="22" height="24" viewBox="0 0 22 24" fill="none" stroke="#2b2b2b" stroke-width="1.900" stroke-linecap="round" stroke-linejoin="round"><path d="M10.800 2.300H4.900A3 3 0 0 0 1.900 5.300V19.400A3 3 0 0 0 4.900 22.400H17.100A3 3 0 0 0 20.100 19.400V11.600"/><path d="M13.800 4.600L17.700 7.100 12.400 17.600 7.500 19.600 8 14.700Z"/><path d="M8 14.700L12.400 17.600"/><path d="M14.500 2.500L16.400 .3 20.600 3 18.700 5.300"/></svg></div><div class="abs" style="left:117px;top:23px"><svg width="22" height="22" viewBox="0 0 22 22" fill="none" stroke="#2b2b2b" stroke-width="1.900" stroke-linecap="round" stroke-linejoin="round"><rect x="1.450" y="1.550" width="6.900" height="6.800" rx="2.400"/><rect x="13.550" y="1.550" width="7.100" height="6.800" rx="2.400"/><rect x="1.450" y="13.650" width="6.900" height="6.950" rx="2.400"/><path d="M17.600 13.650H15.950A2.400 2.400 0 0 0 13.550 16.050V18.200A2.400 2.400 0 0 0 15.950 20.600H18.250A2.400 2.400 0 0 0 20.650 18.200V16.500"/></svg></div></div>
</div>
<div class="row" style="top:768px">
<div class="c n">13</div>
<div class="cb"></div>
<div class="c" style="left:241px">HL4906FB00010</div>
<div class="c" style="left:663px">163</div>
<div class="tag ta">在库</div>
<div class="c z" style="left:976px">毛方棒（材料）</div>
<div class="c" style="left:1206px">000300002</div>
<div class="c z" style="left:1432px">毛方棒（材料）</div>
<div class="c" style="left:1951px">HL4906FB</div>
<div class="c z" style="left:2151px">公斤</div>
<div class="ops"><div class="abs" style="left:61px;top:22px"><svg width="22" height="24" viewBox="0 0 22 24" fill="none" stroke="#2b2b2b" stroke-width="1.900" stroke-linecap="round" stroke-linejoin="round"><path d="M10.800 2.300H4.900A3 3 0 0 0 1.900 5.300V19.400A3 3 0 0 0 4.900 22.400H17.100A3 3 0 0 0 20.100 19.400V11.600"/><path d="M13.800 4.600L17.700 7.100 12.400 17.600 7.500 19.600 8 14.700Z"/><path d="M8 14.700L12.400 17.600"/><path d="M14.500 2.500L16.400 .3 20.600 3 18.700 5.300"/></svg></div><div class="abs" style="left:117px;top:23px"><svg width="22" height="22" viewBox="0 0 22 22" fill="none" stroke="#2b2b2b" stroke-width="1.900" stroke-linecap="round" stroke-linejoin="round"><rect x="1.450" y="1.550" width="6.900" height="6.800" rx="2.400"/><rect x="13.550" y="1.550" width="7.100" height="6.800" rx="2.400"/><rect x="1.450" y="13.650" width="6.900" height="6.950" rx="2.400"/><path d="M17.600 13.650H15.950A2.400 2.400 0 0 0 13.550 16.050V18.200A2.400 2.400 0 0 0 15.950 20.600H18.250A2.400 2.400 0 0 0 20.650 18.200V16.500"/></svg></div></div>
</div>
<div class="opshadow"></div>
</div>
<div id="scroll"><div class="abs" style="left:214px;top:0;width:2px;height:30px;background:#d4d4d8"></div><div class="abs" style="left:2305px;top:0;width:2px;height:30px;background:#dedee2"></div></div>
<div class="tb" style="left:1768px;top:1265px">每页显示</div>
<div class="box" style="left:1880px;top:1249px;width:119px;height:63px"><span style="left:16px">50</span><svg class="abs" style="left:80px;top:20px" width="26" height="16" viewBox="0 0 26 16" fill="none" stroke="#333" stroke-width="2.400" stroke-linecap="round" stroke-linejoin="round"><path d="M1.500 1.500L13 13.500 24.500 1.500"/></svg></div>
<svg class="abs" style="left:2057px;top:1268px" width="20" height="24" viewBox="0 0 20 24" fill="none" stroke="#777" stroke-width="2.400" stroke-linecap="round" stroke-linejoin="round"><path d="M2 1.500v21M18 1.500L5.500 12 18 22.500"/></svg>
<svg class="abs" style="left:2109px;top:1268px" width="18" height="24" viewBox="0 0 18 24" fill="none" stroke="#777" stroke-width="2.400" stroke-linecap="round" stroke-linejoin="round"><path d="M15.500 1.500L2.500 12l13 10.500"/></svg>
<div class="tb" style="left:2156px;top:1265px">第</div>
<div class="box" style="left:2196px;top:1249px;width:119px;height:63px"><span style="left:17px">1</span></div>
<div class="tb" style="left:2332px;top:1265px">页</div>
<svg class="abs" style="left:2386px;top:1268px" width="18" height="24" viewBox="0 0 18 24" fill="none" stroke="#555" stroke-width="2.400" stroke-linecap="round" stroke-linejoin="round"><path d="M2.500 1.500L15.500 12l-13 10.500"/></svg>
<svg class="abs" style="left:2437px;top:1268px" width="20" height="24" viewBox="0 0 20 24" fill="none" stroke="#555" stroke-width="2.400" stroke-linecap="round" stroke-linejoin="round"><path d="M18 1.500v21M2 1.500L14.500 12 2 22.500"/></svg>
<div class="tb" style="left:2508px;top:1265px">共21页, 1048条记录</div>
<div class="abs" style="left:292px;top:1324px;width:2506px;height:2px;background:#f0f0f2"></div>
<div id="float"><svg class="abs" style="left:0;top:0" width="40" height="104" viewBox="0 0 40 104"><ellipse cx="50" cy="42" rx="33" ry="25" fill="#b9c3ea"/><ellipse cx="49" cy="36.500" rx="33" ry="26" fill="#eef1fd"/><ellipse cx="17.500" cy="23.500" rx="2.400" ry="4.600" fill="#3a63e8" transform="rotate(18 17.500 23.500)"/><ellipse cx="47.500" cy="42.500" rx="22.500" ry="17" fill="#2b5fe3"/><ellipse cx="48.500" cy="42.500" rx="21.500" ry="15.500" fill="#0b0b6e"/><rect x="32.500" y="38.500" width="12" height="12.500" rx="3" fill="#74e3ff"/><rect x="30.500" y="36.500" width="16" height="16.500" rx="5" fill="#2f8df0" opacity=".35"/></svg><div class="abs" style="left:14px;top:69px;font-size:21px;font-weight:bold;color:#4d6bf5;white-space:nowrap;line-height:30px">小畅</div></div>
<div id="btmshade"></div>
</body>
</html>
